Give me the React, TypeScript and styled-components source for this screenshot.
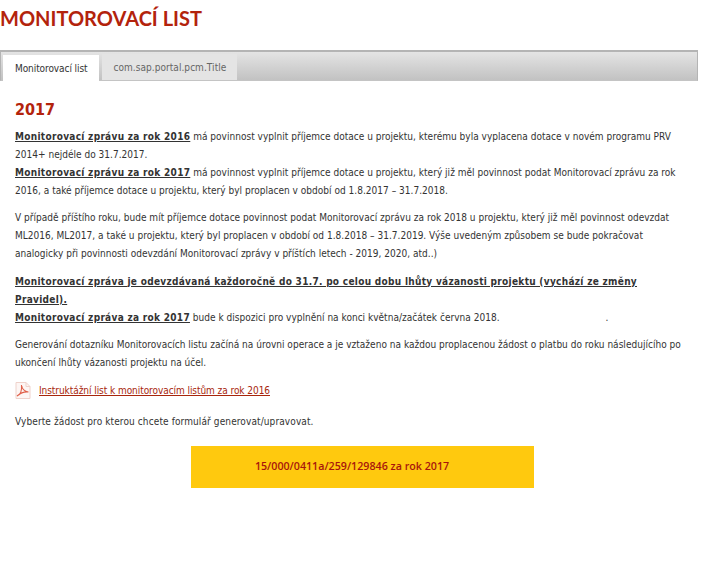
import React from "react";
import styled, { createGlobalStyle } from "styled-components";

const Global = createGlobalStyle`
  html, body { margin: 0; padding: 0; background: #fff; }
  body { font-family: "DejaVu Sans Condensed", "DejaVu Sans", sans-serif; color: #333; }
`;

const Page = styled.div`
  width: 724px;
  height: 568px;
  overflow: hidden;
`;
const Title = styled.h1`
  margin: 0;
  padding: 6px 0 0 0;
  height: 44px;
  box-sizing: border-box;
  font: 700 20px/24px Lato, "Liberation Sans", sans-serif;
  color: #b3230c;
  white-space: nowrap;
`;
const TabBar = styled.div`
  width: 698px;
  height: 31px;
  margin-top: 6px;
  box-sizing: border-box;
  display: flex;
  align-items: flex-end;
  gap: 3px;
  padding: 4px 0 0 2px;
  border: 1px solid #b4b4b4;
  border-top: 2px solid #b4b4b4;
  border-bottom: 1px solid #c4c4c4;
  background: linear-gradient(#e4e4e4, #c2c2c2);
`;
const Tab = styled.div<{ $active?: boolean }>`
  height: 26px;
  box-sizing: border-box;
  padding: 0 ${(p) => (p.$active ? "12px" : "11px")};
  display: flex;
  align-items: center;
  font: 10px "DejaVu Sans Condensed", "DejaVu Sans", sans-serif;
  letter-spacing: ${(p) => (p.$active ? "-0.08px" : "0.05px")};
  color: ${(p) => (p.$active ? "#333" : "#666")};
  background: ${(p) => (p.$active ? "#fff" : "#e4e4e4")};
  margin-bottom: ${(p) => (p.$active ? "-1px" : "0")};
`;
const Content = styled.div`
  padding: 0 15px;
`;
const Year = styled.h2`
  margin: 19px 0 7.5px;
  font: 700 16px/20px "DejaVu Sans Condensed", "DejaVu Sans", sans-serif;
  color: #b3230c;
`;
const Para = styled.p<{ $spacing?: number }>`
  margin: 0 0 9.5px;
  font: 10px/18px "DejaVu Sans Condensed", "DejaVu Sans", sans-serif;
  letter-spacing: ${(p) => p.$spacing ?? 0.02}px;
  color: #333;
  white-space: nowrap;
`;
const Strong = styled.span`
  font-weight: 700;
  text-decoration: underline;
  letter-spacing: 0.3px;
`;
const FileRow = styled.div`
  display: flex;
  align-items: center;
  gap: 8px;
  height: 18px;
  margin-bottom: 13px;
`;
const FileLink = styled.a`
  font: 10px "DejaVu Sans Condensed", "DejaVu Sans", sans-serif;
  letter-spacing: -0.06px;
  color: #a8260c;
  text-decoration: underline;
`;
const Dot = styled.span`
  margin-left: 106px;
`;
const ActionWrap = styled.div`
  display: flex;
  justify-content: center;
  margin-top: 15px;
`;
const Action = styled.button`
  width: 343px;
  height: 42px;
  border: 0;
  padding: 0 20px 1px 0;
  background: #ffc90e;
  color: #a8150c;
  font: 600 10.7px "Open Sans", sans-serif;
`;

const PdfIcon = () => (
  <svg width="16" height="17" viewBox="0 0 16 17" fill="none">
    <path d="M1 .5h10l4 4v12H1z" fill="#fdf6f4" stroke="#efd2cb" />
    <path d="M11 .5v4h4" stroke="#efd2cb" />
    <path d="M2 14c3-1 5-5 4.5-11 .5 3.500 3 6.500 7 7-4-.5-8 1-11.500 4z" stroke="#e0604a" strokeWidth="1.1" />
  </svg>
);

export default function App() {
  return (
    <Page>
      <Global />
      <Title>MONITOROVACÍ LIST</Title>
      <TabBar>
        <Tab $active>Monitorovací list</Tab>
        <Tab>com.sap.portal.pcm.Title</Tab>
      </TabBar>
      <Content>
        <Year>2017</Year>
        <Para>
          <Strong>Monitorovací zprávu za rok 2016</Strong> má povinnost vyplnit příjemce dotace u projektu, kterému byla vyplacena dotace v novém programu PRV
          <br />
          2014+ nejdéle do 31.7.2017.
          <br />
          <Strong>Monitorovací zprávu za rok 2017</Strong> má povinnost vyplnit příjemce dotace u projektu, který již měl povinnost podat Monitorovací zprávu za rok
          <br />
          2016, a také příjemce dotace u projektu, který byl proplacen v období od 1.8.2017 – 31.7.2018.
        </Para>
        <Para>
          V případě příštího roku, bude mít příjemce dotace povinnost podat Monitorovací zprávu za rok 2018 u projektu, který již měl povinnost odevzdat
          <br />
          ML2016, ML2017, a také u projektu, který byl proplacen v období od 1.8.2018 – 31.7.2019. Výše uvedeným způsobem se bude pokračovat
          <br />
          analogicky při povinnosti odevzdání Monitorovací zprávy v příštích letech - 2019, 2020, atd..)
        </Para>
        <Para>
          <Strong>Monitorovací zpráva je odevzdávaná každoročně do 31.7. po celou dobu lhůty vázanosti projektu (vychází ze změny</Strong>
          <br />
          <Strong>Pravidel).</Strong>
          <br />
          <Strong>Monitorovací zpráva za rok 2017</Strong> bude k dispozici pro vyplnění na konci května/začátek června 2018.<Dot>.</Dot>
        </Para>
        <Para>
          Generování dotazníku Monitorovacích listu začíná na úrovni operace a je vztaženo na každou proplacenou žádost o platbu do roku následujícího po
          <br />
          ukončení lhůty vázanosti projektu na účel.
        </Para>
        <FileRow>
          <PdfIcon />
          <FileLink>Instruktážní list k monitorovacím listům za rok 2016</FileLink>
        </FileRow>
        <Para $spacing={0.11}>Vyberte žádost pro kterou chcete formulář generovat/upravovat.</Para>
        <ActionWrap>
          <Action>15/000/0411a/259/129846 za rok 2017</Action>
        </ActionWrap>
      </Content>
    </Page>
  );
}
